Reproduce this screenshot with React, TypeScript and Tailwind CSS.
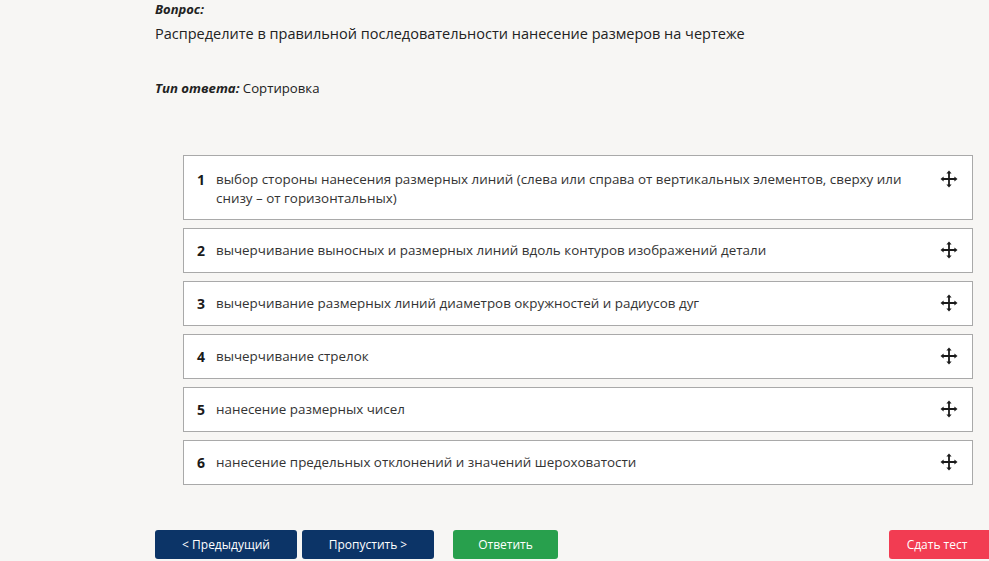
import React from "react";

const items = [
  "выбор стороны нанесения размерных линий (слева или справа от вертикальных элементов, сверху или снизу – от горизонтальных)",
  "вычерчивание выносных и размерных линий вдоль контуров изображений детали",
  "вычерчивание размерных линий диаметров окружностей и радиусов дуг",
  "вычерчивание стрелок",
  "нанесение размерных чисел",
  "нанесение предельных отклонений и значений шероховатости",
];

function MoveIcon() {
  return (
    <svg width="18" height="18" viewBox="0 0 18 18" className="shrink-0">
      <path d="M9 2.5 V15.5 M2.5 9 H15.5" stroke="#1a1a1a" strokeWidth="1.8" />
      <path d="M9 0.5 L11.6 3.6 H6.4 Z" fill="#1a1a1a" />
      <path d="M9 17.5 L11.6 14.4 H6.4 Z" fill="#1a1a1a" />
      <path d="M0.5 9 L3.6 6.4 V11.6 Z" fill="#1a1a1a" />
      <path d="M17.5 9 L14.4 6.4 V11.6 Z" fill="#1a1a1a" />
    </svg>
  );
}

export default function App() {
  return (
    <div
      className="w-[989px] h-[561px] overflow-hidden bg-[#f7f6f4] text-[#2b2b2b]"
      style={{ fontFamily: '"Open Sans", "Noto Sans", sans-serif' }}
    >
      <div className="pl-[155px]">
        <div className="text-[13px] font-bold italic leading-[18px] text-[#222]">Вопрос:</div>
        <div className="text-[14.5px] leading-[20px] mt-[6px] text-[#222]">
          Распределите в правильной последовательности нанесение размеров на чертеже
        </div>
        <div className="text-[13.2px] leading-[18px] mt-[35px] text-[#222]">
          <span className="font-bold italic">Тип ответа:</span> Сортировка
        </div>
      </div>

      <div className="ml-[183px] w-[790px] mt-[58px] flex flex-col gap-[8px]">
        {items.map((t, i) => (
          <div
            key={i}
            className={`bg-white border border-[#a9a9a9] flex items-start pl-[13px] pr-[14px] ${
              i === 0 ? "h-[65px] pt-[14px]" : "h-[45px] pt-[12px]"
            }`}
          >
            <span className="text-[14px] font-bold w-[19px] shrink-0 leading-[19px] text-[#1a1a1a]">{i + 1}</span>
            <span className="text-[13.4px] leading-[19px] flex-1 pr-[30px] text-[#333]">{t}</span>
            <span>
              <MoveIcon />
            </span>
          </div>
        ))}
      </div>

      <div className="flex items-center mt-[45px] pl-[155px]">
        <button className="w-[142px] h-[29px] rounded-[3px] bg-[#0c3467] text-white text-[12px]">
          &lt; Предыдущий
        </button>
        <button className="ml-[5px] w-[132px] h-[29px] rounded-[3px] bg-[#0c3467] text-white text-[12px]">
          Пропустить &gt;
        </button>
        <button className="ml-[19px] w-[105px] h-[29px] rounded-[3px] bg-[#28a04d] text-white text-[12px]">
          Ответить
        </button>
        <div className="flex-1" />
        <button className="w-[100px] h-[29px] rounded-l-[3px] bg-[#f23c52] text-white text-[12px] pr-[4px]">
          Сдать тест
        </button>
      </div>
    </div>
  );
}
